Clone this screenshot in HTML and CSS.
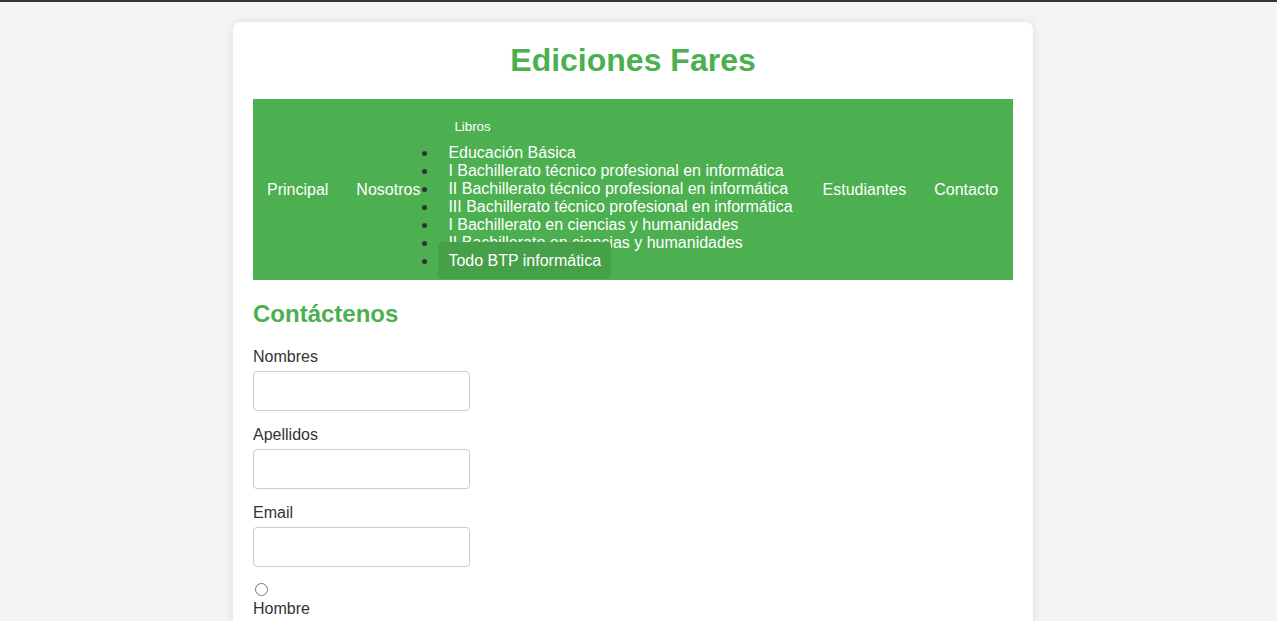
FILE: index.html
```html
<!DOCTYPE html>
<html lang="es">
<head>
<meta charset="utf-8">
<title>Ediciones Fares</title>
<link rel="stylesheet" href="styles.css">
</head>
<body>
<div class="container">
  <h1 class="title">Ediciones Fares</h1>
  <nav class="nav">
    <ul class="nav-list">
      <li class="nav-item"><a class="nav-link" href="#">Principal</a></li>
      <li class="nav-item"><a class="nav-link" href="#">Nosotros</a></li>
      <li class="nav-item dropdown">
        <button class="dropbtn" type="button">Libros</button>
        <ul class="dropdown-content">
          <li class="drop-item"><a class="drop-link" href="#">Educación Básica</a></li>
          <li class="drop-item"><a class="drop-link" href="#">I Bachillerato técnico profesional en informática</a></li>
          <li class="drop-item"><a class="drop-link" href="#">II Bachillerato técnico profesional en informática</a></li>
          <li class="drop-item"><a class="drop-link" href="#">III Bachillerato técnico profesional en informática</a></li>
          <li class="drop-item"><a class="drop-link" href="#">I Bachillerato en ciencias y humanidades</a></li>
          <li class="drop-item"><a class="drop-link" href="#">II Bachillerato en ciencias y humanidades</a></li>
          <li class="drop-item"><a class="drop-link drop-link-active" href="#">Todo BTP informática</a></li>
        </ul>
      </li>
      <li class="nav-item"><a class="nav-link" href="#">Estudiantes</a></li>
      <li class="nav-item"><a class="nav-link" href="#">Contacto</a></li>
    </ul>
  </nav>
  <section class="contact">
    <h2 class="contact-title">Contáctenos</h2>
    <form class="contact-form">
      <label class="field-label" for="nombres">Nombres</label>
      <input class="field-input" type="text" id="nombres">
      <label class="field-label" for="apellidos">Apellidos</label>
      <input class="field-input" type="text" id="apellidos">
      <label class="field-label" for="email">Email</label>
      <input class="field-input" type="email" id="email">
      <input class="field-radio" type="radio" name="sexo" id="hombre">
      <label class="field-label" for="hombre">Hombre</label>
      <input class="field-radio" type="radio" name="sexo" id="mujer">
      <label class="field-label" for="mujer">Mujer</label>
    </form>
  </section>
</div>
</body>
</html>
```

FILE: styles.css
```css
html, body {
  margin: 0;
}
body {
  background: #f4f4f4;
  border-top: 2px solid #333;
  padding-right: 11px;
  font-family: "Liberation Sans", Arial, sans-serif;
  font-size: 16px;
  color: #333;
}
.container {
  box-sizing: border-box;
  width: 800px;
  margin: 20px auto;
  padding: 20px;
  background: #fff;
  border-radius: 8px;
  box-shadow: 0 0 10px rgba(0, 0, 0, 0.1);
}
.title {
  margin: 0 0 20px;
  text-align: center;
  color: #4caf50;
  font-size: 32px;
  font-weight: bold;
}
.nav {
  background: #4caf50;
}
.nav-list {
  list-style: none;
  margin: 0;
  padding: 0;
  display: flex;
  align-items: center;
}
.nav-item {
  flex-shrink: 0;
}
.nav-link {
  display: block;
  padding: 14px;
  color: #fff;
  text-decoration: none;
  white-space: nowrap;
}
.dropbtn {
  display: block;
  padding: 20px 20px 10px;
  margin: 0;
  border: 0;
  background: none;
  color: #fff;
  font-family: "Liberation Sans", Arial, sans-serif;
  font-size: 13.333px;
}
.dropdown-content {
  list-style: disc;
  margin: 0;
  padding: 0 6px 10px 4px;
}
.drop-item {
  white-space: nowrap;
}
.drop-link {
  padding: 10px;
  color: #fff;
  text-decoration: none;
  border-radius: 4px;
}
.drop-link-active {
  background: #45a049;
}
.contact-title {
  margin: 20px 0;
  color: #4caf50;
  font-size: 24px;
}
.field-label {
  display: block;
  margin-bottom: 5px;
}
.field-input {
  display: block;
  box-sizing: border-box;
  width: 217px;
  height: 40px;
  margin: 0 0 15px;
  padding: 10px;
  border: 1px solid #ccc;
  border-radius: 4px;
  font-size: 16px;
}
.field-radio {
  display: block;
  margin: 16px 0 4px 2px;
}
```
